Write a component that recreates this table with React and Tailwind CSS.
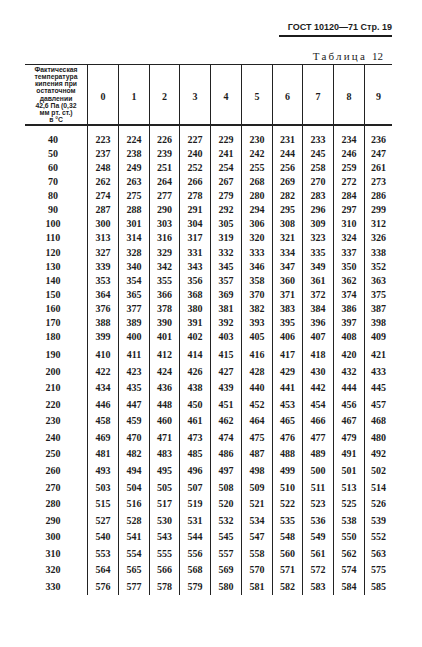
import React from "react";

// table 12 — boiling temperature conversion (values per row: tenths 0..9)
const rows = [
  [40, 223, 224, 226, 227, 229, 230, 231, 233, 234, 236],
  [50, 237, 238, 239, 240, 241, 242, 244, 245, 246, 247],
  [60, 248, 249, 251, 252, 254, 255, 256, 258, 259, 261],
  [70, 262, 263, 264, 266, 267, 268, 269, 270, 272, 273],
  [80, 274, 275, 277, 278, 279, 280, 282, 283, 284, 286],
  [90, 287, 288, 290, 291, 292, 294, 295, 296, 297, 299],
  [100, 300, 301, 303, 304, 305, 306, 308, 309, 310, 312],
  [110, 313, 314, 316, 317, 319, 320, 321, 323, 324, 326],
  [120, 327, 328, 329, 331, 332, 333, 334, 335, 337, 338],
  [130, 339, 340, 342, 343, 345, 346, 347, 349, 350, 352],
  [140, 353, 354, 355, 356, 357, 358, 360, 361, 362, 363],
  [150, 364, 365, 366, 368, 369, 370, 371, 372, 374, 375],
  [160, 376, 377, 378, 380, 381, 382, 383, 384, 386, 387],
  [170, 388, 389, 390, 391, 392, 393, 395, 396, 397, 398],
  [180, 399, 400, 401, 402, 403, 405, 406, 407, 408, 409],
  [190, 410, 411, 412, 414, 415, 416, 417, 418, 420, 421],
  [200, 422, 423, 424, 426, 427, 428, 429, 430, 432, 433],
  [210, 434, 435, 436, 438, 439, 440, 441, 442, 444, 445],
  [220, 446, 447, 448, 450, 451, 452, 453, 454, 456, 457],
  [230, 458, 459, 460, 461, 462, 464, 465, 466, 467, 468],
  [240, 469, 470, 471, 473, 474, 475, 476, 477, 479, 480],
  [250, 481, 482, 483, 485, 486, 487, 488, 489, 491, 492],
  [260, 493, 494, 495, 496, 497, 498, 499, 500, 501, 502],
  [270, 503, 504, 505, 507, 508, 509, 510, 511, 513, 514],
  [280, 515, 516, 517, 519, 520, 521, 522, 523, 525, 526],
  [290, 527, 528, 530, 531, 532, 534, 535, 536, 538, 539],
  [300, 540, 541, 543, 544, 545, 547, 548, 549, 550, 552],
  [310, 553, 554, 555, 556, 557, 558, 560, 561, 562, 563],
  [320, 564, 565, 566, 568, 569, 570, 571, 572, 574, 575],
  [330, 576, 577, 578, 579, 580, 581, 582, 583, 584, 585],
];

const cols =
  "grid grid-cols-[62px_31px_31px_30px_31px_31px_31px_30px_31px_31px_28px]";

const Spacer = ({ className }) => (
  <div className={`${cols} ${className}`}>
    <div />
    {Array.from({ length: 10 }).map((_, i) => (
      <div key={i} className="border-l border-[#222]" />
    ))}
  </div>
);

const Row = ({ cells, tall }) => (
  <div className={`${cols} ${tall ? "h-[16.57px]" : "h-[14.14px]"}`}>
    <div className="flex items-center justify-center pr-[6px]">{cells[0]}</div>
    {cells.slice(1).map((v, i) => (
      <div
        key={i}
        className="flex items-center justify-center border-l border-[#222]"
      >
        {v}
      </div>
    ))}
  </div>
);

export default function App() {
  return (
    <div className="w-[422px] h-[647px] bg-white text-[#1c1c1c] pl-[25px] pr-[30px] pt-[21px] overflow-hidden">
      <div className="flex justify-end">
        <div className="w-[113px] border-b-2 border-[#1c1c1c] pb-[2px] text-right font-['Liberation_Sans',sans-serif] font-bold text-[9px] leading-[12px]">
          ГОСТ 10120—71 Стр. 19
        </div>
      </div>

      <div className="flex justify-end pr-[9px] mt-[13px] font-['Liberation_Serif',serif] text-[11px] leading-[12px]">
        <span className="tracking-[2.2px]">Таблица</span>
        <span className="ml-[5px]">12</span>
      </div>

      <div className="mt-[2px] border-t border-[#222] font-['Liberation_Serif',serif] font-bold text-[10px] leading-none">
        <div className={`${cols} h-[61px] border-b-[2.5px] border-[#222]`}>
          <div className="flex items-center justify-center text-center font-['Liberation_Sans',sans-serif] text-[6.8px] leading-[7.2px]">
            <div>
              Фактическая
              <br />
              температура
              <br />
              кипения при
              <br />
              остаточном
              <br />
              давлении
              <br />
              42,6 Па (0,32
              <br />
              мм рт. ст.)
              <br />в °С
            </div>
          </div>
          {["0", "1", "2", "3", "4", "5", "6", "7", "8", "9"].map((h) => (
            <div
              key={h}
              className="flex items-center justify-center border-l border-[#222] pt-[4px]"
            >
              {h}
            </div>
          ))}
        </div>

        <Spacer className="h-[6.5px]" />
        {rows.slice(0, 15).map((r) => (
          <Row key={r[0]} cells={r} />
        ))}
        <Spacer className="h-[2.4px]" />
        {rows.slice(15).map((r) => (
          <Row key={r[0]} cells={r} tall />
        ))}
      </div>
    </div>
  );
}
